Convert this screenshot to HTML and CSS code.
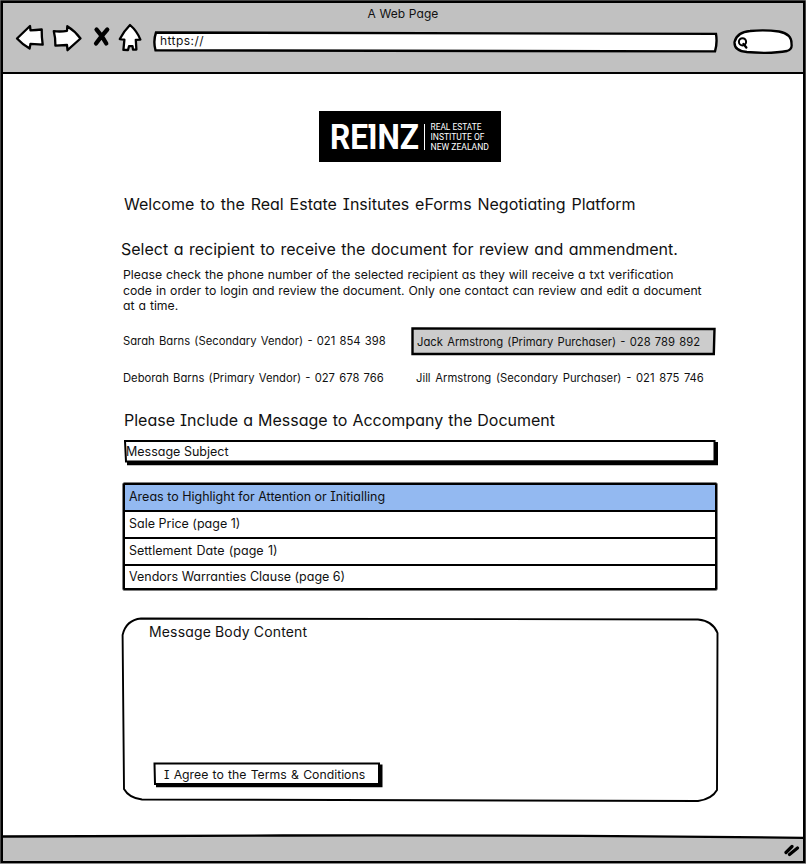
FILE: index.html
```html
<!DOCTYPE html>
<html lang="en">
<head>
<meta charset="utf-8">
<title>A Web Page</title>
<link rel="stylesheet" href="styles.css">
</head>
<body>
<div class="window">
  <header class="toolbar">
    <div class="window-title"><span>A Web Page</span></div>
    <div class="controls">
      <svg class="nav-icons" width="130" height="34" viewBox="14 20 130 34">
        <g fill="#fff" stroke="#000" stroke-width="2.3" stroke-linejoin="round" stroke-linecap="round">
          <path d="M17 37.500L30 25L30.500 29.300Q36 29.300 41.700 28.500Q41.600 36 42.700 43.600L30.500 42.800L29.600 47.600Q22 43 17 37.500Z"/>
          <path d="M53.800 30.200Q61 31 67 29.800L67.300 25.200Q75 30 80.500 37.500L67.500 49.200L67 44L55.400 44.600Q55.600 37 53.800 30.200Z"/>
          <path d="M130 24Q124 30 119.800 38L124.400 38.600L123.400 48.800L128 49L129 45.200L132.500 45.200L133 48.600L136.400 48.600L135.800 38.800L140.400 38.600Q137 30 130 24Z"/>
        </g>
        <path d="M96.500 28.500Q102 34.500 106.300 42.500M107.300 28.500Q101.500 35 96 42.500" fill="none" stroke="#000" stroke-width="4.200" stroke-linecap="round"/>
      </svg>
      <div class="address">
        <svg class="sketch" viewBox="0 0 566 22"><path d="M3 1.500Q250 1.800 563 2.900Q564.500 12 562 20.400L2.500 19.300Q0 10 3 1.500Z" fill="#fff" stroke="#000" stroke-width="2.400"/></svg>
        <span>https://</span>
      </div>
      <svg class="search" width="60" height="26" viewBox="733 28 60 26">
        <path d="M747 51Q734 50 734.500 41Q737 31 750 30Q765 28.500 779 30.500Q792 33 791.500 43Q792.500 48 787 50Q772 53 746 51Z" fill="#fff" stroke="#000" stroke-width="2.300"/>
        <circle cx="742.500" cy="40.800" r="3.600" fill="none" stroke="#000" stroke-width="2"/>
        <path d="M743.500 43L746.300 46.500" stroke="#000" stroke-width="2.400" stroke-linecap="round"/>
      </svg>
    </div>
  </header>

  <main class="page">
    <svg class="logo" width="182" height="51" viewBox="319 111 182 51">
      <rect x="319" y="111" width="182" height="51"/>
      <text class="logo-mark" x="330" y="149.300" textLength="89" lengthAdjust="spacingAndGlyphs">REINZ</text>
      <path d="M368.500 124H374V128H368.500Z" fill="#fff"/>
      <path d="M424.500 124V150" stroke="#fff"/>
      <g class="logo-name">
        <text x="430.500" y="130.300" textLength="51" lengthAdjust="spacingAndGlyphs">REAL ESTATE</text>
        <text x="430.500" y="140" textLength="54" lengthAdjust="spacingAndGlyphs">INSTITUTE OF</text>
        <text x="430.500" y="149.700" textLength="58.500" lengthAdjust="spacingAndGlyphs">NEW ZEALAND</text>
      </g>
    </svg>

    <h1 class="heading welcome"><span>Welcome to the Real Estate Insitutes eForms Negotiating Platform</span></h1>
    <h2 class="heading select"><span>Select a recipient to receive the document for review and ammendment.</span></h2>
    <p class="hint"><span>Please check the phone number of the selected recipient as they will receive a txt verification</span><br><span>code in order to login and review the document. Only one contact can review and edit a document</span><br><span>at a time.</span></p>

    <div class="contacts">
      <div class="contact first"><span>Sarah Barns (Secondary Vendor) - 021 854 398</span></div>
      <div class="contact selected">
        <svg class="sketch" viewBox="0 0 305 29"><path d="M1.500 1.500L303.500 2L302.800 27L1.500 27Z" fill="#ccc" stroke="#000" stroke-width="2.400"/></svg>
        <span>Jack Armstrong (Primary Purchaser) - 028 789 892</span>
      </div>
      <div class="contact"><span>Deborah Barns (Primary Vendor) - 027 678 766</span></div>
      <div class="contact last"><span>Jill Armstrong (Secondary Purchaser) - 021 875 746</span></div>
    </div>

    <h2 class="heading include"><span>Please Include a Message to Accompany the Document</span></h2>

    <div class="subject">
      <svg class="sketch" viewBox="0 0 595 26"><path d="M3 20.500H590V2H594V25.300H3Z"/><path d="M1 1L590.500 1V21L2 21.500Z" fill="#fff" stroke="#000" stroke-width="2"/></svg>
      <span>Message Subject</span>
    </div>

    <div class="areas">
      <div class="area head"><span>Areas to Highlight for Attention or Initialling</span></div>
      <div class="area"><span>Sale Price (page 1)</span></div>
      <div class="area settlement"><span>Settlement Date (page 1)</span></div>
      <div class="area"><span>Vendors Warranties Clause (page 6)</span></div>
    </div>

    <div class="message">
      <svg class="sketch" viewBox="0 0 598 185"><path d="M20 1.500Q300 1.500 577 2.500Q592 4 596.500 16L596 173Q591 182 577 184L21 182.500Q8 181 3 172Q2 90 1.600 18Q5 3 20 1.500Z" fill="#fff" stroke="#000" stroke-width="1.900"/></svg>
      <div class="message-text"><span>Message Body Content</span></div>
      <div class="agree">
        <svg class="sketch" viewBox="0 0 230 26"><path d="M3 21H225V2.500H229.500V25.300H3Z"/><path d="M1.500 1.500H226V22H2Z" fill="#fff" stroke="#000" stroke-width="2"/></svg>
        <span>I Agree to the Terms &amp; Conditions</span>
      </div>
    </div>
  </main>

  <footer class="status">
    <svg class="sketch" viewBox="0 0 800 27"><path d="M-5 2.500Q60 2.500 280 1.500Q620 1 805 4V40H-5Z" fill="#c1c1c1" stroke="#000" stroke-width="2.300"/></svg>
    <svg class="grip" width="18" height="14" viewBox="784 845 18 14"><path d="M786 853.500L792 847.500M789.500 855.500L797.500 849" stroke="#000" stroke-width="3.200" stroke-linecap="round"/></svg>
  </footer>
</div>
</body>
</html>
```
FILE: styles.css
```css
* { box-sizing: border-box; }

body {
  margin: 0;
  background: #8a8a8a;
  color: #111;
  font-family: Inter, "Liberation Sans", sans-serif;
  font-feature-settings: "cv11", "cv08", "ss03";
}

span { white-space: nowrap; }

.window {
  display: flex;
  flex-direction: column;
  width: 804px;
  height: 862px;
  margin: 1px 0 0 1px;
  border: 2px solid #000;
  box-shadow: 0 0 0 .5px #000;
  background: #fff;
}

.toolbar {
  flex: none;
  height: 71px;
  border-bottom: 2px solid #000;
  background: #c1c1c1;
}

.window-title {
  height: 18px;
  padding-top: 3px;
  font-size: 12px;
  line-height: 16px;
  letter-spacing: .1px;
  text-align: center;
}

.controls { display: flex; padding-left: 11px; }
.nav-icons { margin-right: 9px; }

.address {
  position: relative;
  width: 566px;
  height: 22px;
  margin-top: 10px;
  padding-left: 7px;
  font-size: 12px;
  line-height: 20px;
  letter-spacing: .44px;
}

.address span, .contact span, .subject span, .agree span { position: relative; }

.sketch { position: absolute; left: 0; top: 0; width: 100%; height: 100%; }

.search { margin: 8px 0 0 14px; }

.page { flex: 1; padding-left: 118px; }

.logo { display: block; margin: 37px 0 32px 198px; }
.logo text { fill: #fff; }
.logo-mark { font: 700 35.500px Roboto, sans-serif; }
.logo-name { font: 400 8.200px Roboto, sans-serif; }

.heading { margin: 0; font-size: 16px; font-weight: 400; line-height: 20px; }
.welcome { padding-left: 3px; word-spacing: 1.400px; }
.select { margin-top: 25px; word-spacing: 1px; }
.hint { margin: 8px 0 0 2px; font-size: 12.250px; line-height: 15.500px; word-spacing: .5px; }

.contacts {
  display: grid;
  grid-template-columns: 288px 305px;
  grid-auto-rows: 29px;
  row-gap: 7px;
  margin: 13px 0 0 2px;
  font-size: 11.250px;
  line-height: 31px;
  word-spacing: 1.050px;
}
.contact { position: relative; }
.contact.first { top: -1px; }
.contact.first, .contact.first ~ .contact { letter-spacing: 0; }
.contact.selected { padding-left: 6px; }
.contact.last { padding-left: 5px; word-spacing: 1.500px; }

.include { margin-top: 18px; padding-left: 3px; word-spacing: .55px; }

.subject {
  position: relative;
  width: 595px;
  height: 26px;
  margin: 10px 0 0 3px;
  padding-left: 2px;
  font-size: 12.500px;
  line-height: 24px;
}

.areas {
  width: 594px;
  margin: 17px 0 0 2px;
  border: 2px solid #000;
  border-radius: 1px;
  box-shadow: 0 0 0 .5px #000;
  font-size: 12.500px;
}
.area { height: 27px; padding-left: 4px; border-bottom: 2px solid #000; line-height: 23px; }
.area.head { background: #93b9f1; }
.area.settlement { word-spacing: .8px; }
.area:last-child { height: 22px; border-bottom: 0; line-height: 22px; }

.message {
  position: relative;
  width: 598px;
  height: 185px;
  margin: 27px 0 0 0;
  padding: 6px 0 0 28px;
}
.message-text { position: relative; font-size: 14px; line-height: 18px; letter-spacing: .15px; }
.agree {
  position: relative;
  width: 230px;
  height: 26px;
  margin: 121px 0 0 4px;
  padding-left: 11px;
  font-size: 12.250px;
  line-height: 26px;
  word-spacing: .8px;
}

.status {
  position: relative;
  display: flex;
  flex: none;
  justify-content: flex-end;
  height: 27px;
  padding: 10px 1px 0 0;
}
.status .grip { position: relative; }
```
